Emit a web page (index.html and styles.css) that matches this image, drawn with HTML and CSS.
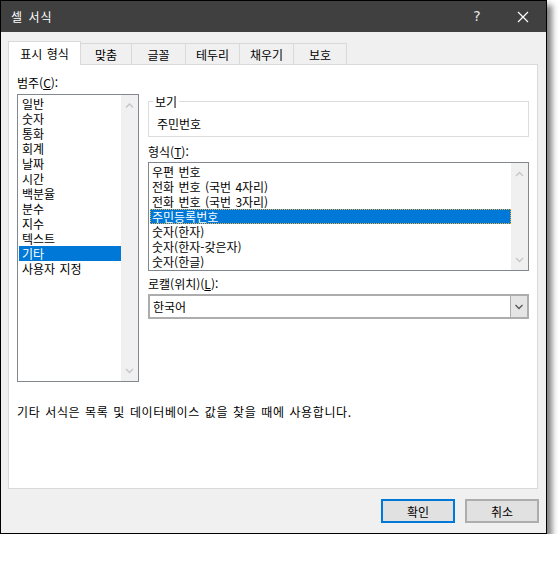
FILE: index.html
```html
<!DOCTYPE html>
<html lang="ko">
<head>
<meta charset="utf-8">
<title>셀 서식</title>
<link rel="stylesheet" href="styles.css">
</head>
<body>
<div class="window">
  <div class="titlebar">
    <span class="title">셀 서식</span>
    <span class="tb-btn help">?</span>
    <span class="tb-btn close"><svg width="12" height="12" viewBox="0 0 12 12"><path d="M1 1L11 11M11 1L1 11" stroke="#ffffff" stroke-width="1.2" fill="none"/></svg></span>
  </div>
  <div class="body">
    <div class="tabs">
      <div class="tab active">표시 형식</div>
      <div class="tab w52">맞춤</div>
      <div class="tab w55">글꼴</div>
      <div class="tab w55">테두리</div>
      <div class="tab w55">채우기</div>
      <div class="tab w54">보호</div>
    </div>
    <div class="panel">
      <div class="cols">
        <div class="left">
          <div class="label">범주(<u>C</u>):</div>
          <div class="listbox cat">
            <div class="items">
              <div class="item">일반</div>
              <div class="item">숫자</div>
              <div class="item">통화</div>
              <div class="item">회계</div>
              <div class="item">날짜</div>
              <div class="item">시간</div>
              <div class="item">백분율</div>
              <div class="item">분수</div>
              <div class="item">지수</div>
              <div class="item">텍스트</div>
              <div class="item sel">기타</div>
              <div class="item">사용자 지정</div>
            </div>
            <div class="vscroll">
              <svg class="arrow" width="17" height="17" viewBox="0 0 17 17"><path d="M5 10.5L8.5 7L12 10.5" stroke="#c5c5c5" stroke-width="1.3" fill="none"/></svg>
              <svg class="arrow" width="17" height="17" viewBox="0 0 17 17"><path d="M5 7L8.5 10.5L12 7" stroke="#c5c5c5" stroke-width="1.3" fill="none"/></svg>
            </div>
          </div>
        </div>
        <div class="right">
          <fieldset class="group">
            <legend>보기</legend>
            <div class="sample">주민번호</div>
          </fieldset>
          <div class="label lbl-fmt">형식(<u>T</u>):</div>
          <div class="listbox fmt">
            <div class="items">
              <div class="item">우편 번호</div>
              <div class="item">전화 번호 (국번 4자리)</div>
              <div class="item">전화 번호 (국번 3자리)</div>
              <div class="item sel focus">주민등록번호</div>
              <div class="item">숫자(한자)</div>
              <div class="item">숫자(한자-갖은자)</div>
              <div class="item">숫자(한글)</div>
            </div>
            <div class="vscroll">
              <svg class="arrow" width="17" height="17" viewBox="0 0 17 17"><path d="M5 11L8.5 7.5L12 11" stroke="#c5c5c5" stroke-width="1.3" fill="none"/></svg>
              <svg class="arrow" width="17" height="17" viewBox="0 0 17 17"><path d="M5 7L8.5 10.5L12 7" stroke="#c5c5c5" stroke-width="1.3" fill="none"/></svg>
            </div>
          </div>
          <div class="label lbl-loc">로캘(위치)(<u>L</u>):</div>
          <div class="combo">
            <span class="combo-text">한국어</span>
            <span class="combo-btn"><svg width="16" height="21" viewBox="0 0 16 21"><path d="M4.5 9L8 12.5L11.5 9" stroke="#555555" stroke-width="1.3" fill="none"/></svg></span>
          </div>
        </div>
      </div>
      <p class="desc">기타 서식은 목록 및 데이터베이스 값을 찾을 때에 사용합니다.</p>
    </div>
    <div class="buttons">
      <button class="btn default">확인</button>
      <button class="btn">취소</button>
    </div>
  </div>
</div>
</body>
</html>
```
FILE: styles.css
```css
* { box-sizing: border-box; }
html, body { margin: 0; padding: 0; background: #ffffff; }
body {
  font-family: "Noto Sans CJK KR", "Noto Sans", "Liberation Sans", sans-serif;
  font-size: 12px;
  line-height: 15px;
  word-spacing: 1px;
  color: #000000;
}
.window {
  width: 547px;
  height: 534px;
  border: 1px solid #000000;
  background: #f0f0f0;
  box-shadow: 5px 5px 6px rgba(0, 0, 0, 0.5);
  display: flex;
  flex-direction: column;
}
.titlebar {
  height: 31px;
  background: #404040;
  color: #ffffff;
  display: flex;
  align-items: center;
  flex: none;
}
.title { padding-left: 10px; flex: 1; letter-spacing: 1px; }
.tb-btn {
  width: 46px;
  height: 31px;
  display: flex;
  align-items: center;
  justify-content: center;
}
.help { font-family: "DejaVu Sans", sans-serif; font-size: 14px; color: #e6e6e6; }
.body { padding: 9px 7px 0 7px; flex: 1; }
.tabs {
  display: flex;
  align-items: flex-end;
  height: 24px;
  margin-bottom: -1px;
  position: relative;
  z-index: 1;
}
.tab {
  height: 21px;
  margin-bottom: 1px;
  margin-left: -1px;
  border: 1px solid #d9d9d9;
  border-bottom: none;
  background: #f0f0f0;
  display: flex;
  align-items: center;
  justify-content: center;
}
.tab.active {
  width: 73px;
  height: 24px;
  margin-left: 0;
  margin-bottom: 0;
  background: #ffffff;
  padding-bottom: 1px;
}
.w52 { width: 52px; }
.w54 { width: 54px; }
.w55 { width: 55px; }
.panel {
  width: 530px;
  height: 425px;
  border: 1px solid #d9d9d9;
  background: #ffffff;
  padding: 10px 8px 0 8px;
}
.cols { display: flex; gap: 9px; }
.left { width: 122px; flex: none; }
.right { width: 381px; flex: none; }
.label { height: 15px; }
u { text-decoration: underline; text-underline-offset: 1px; }
.listbox {
  border: 1px solid #828790;
  display: flex;
  background: #ffffff;
}
.listbox .items { flex: 1; padding: 1px 0 0 1px; }
.listbox.cat { margin-top: 4px; height: 288px; }
.listbox.cat .item { padding-left: 3px; }
.listbox.fmt { margin-top: 3px; height: 109px; }
.listbox.fmt .items { padding-top: 1px; }
.item { height: 15px; padding-left: 2px; white-space: nowrap; }
.item.sel { background: #0078d7; color: #ffffff; }
.item.focus { outline: 1px dotted #f0b040; outline-offset: -1px; }
.vscroll {
  width: 17px;
  flex: none;
  background: #f0f0f0;
  display: flex;
  flex-direction: column;
  justify-content: space-between;
  padding: 2px 0 2px 0;
}
.arrow { display: block; }
.group {
  margin: 19px 0 0 0;
  padding: 7px 8px 5px 8px;
  border: 1px solid #dcdcdc;
  min-width: 0;
}
.group legend {
  margin-left: -4px;
  padding: 0 2px;
  line-height: 15px;
}
.sample { height: 15px; }
.lbl-fmt { margin-top: 7px; }
.lbl-loc { margin-top: 5px; }
.combo {
  margin-top: 3px;
  height: 25px;
  border: 2px solid #adadad;
  display: flex;
  background: #ffffff;
}
.combo-text { flex: 1; padding-left: 3px; line-height: 21px; }
.combo-btn {
  width: 17px;
  background: #e5e5e5;
  border-left: 1px solid #adadad;
  display: flex;
  align-items: center;
  justify-content: center;
}
.desc { margin: 22px 0 0 0; letter-spacing: 0.6px; }
.buttons {
  display: flex;
  justify-content: flex-end;
  gap: 10px;
  margin-top: 10px;
  padding-right: 0;
}
.btn {
  width: 74px;
  height: 24px;
  font-family: "Noto Sans CJK KR", "Noto Sans", sans-serif;
  font-size: 12px;
  line-height: 15px;
  color: #000000;
  background: #e1e1e1;
  border: 2px solid #adadad;
  padding: 0;
  margin: 0;
}
.btn.default { border-color: #0078d7; }
```
